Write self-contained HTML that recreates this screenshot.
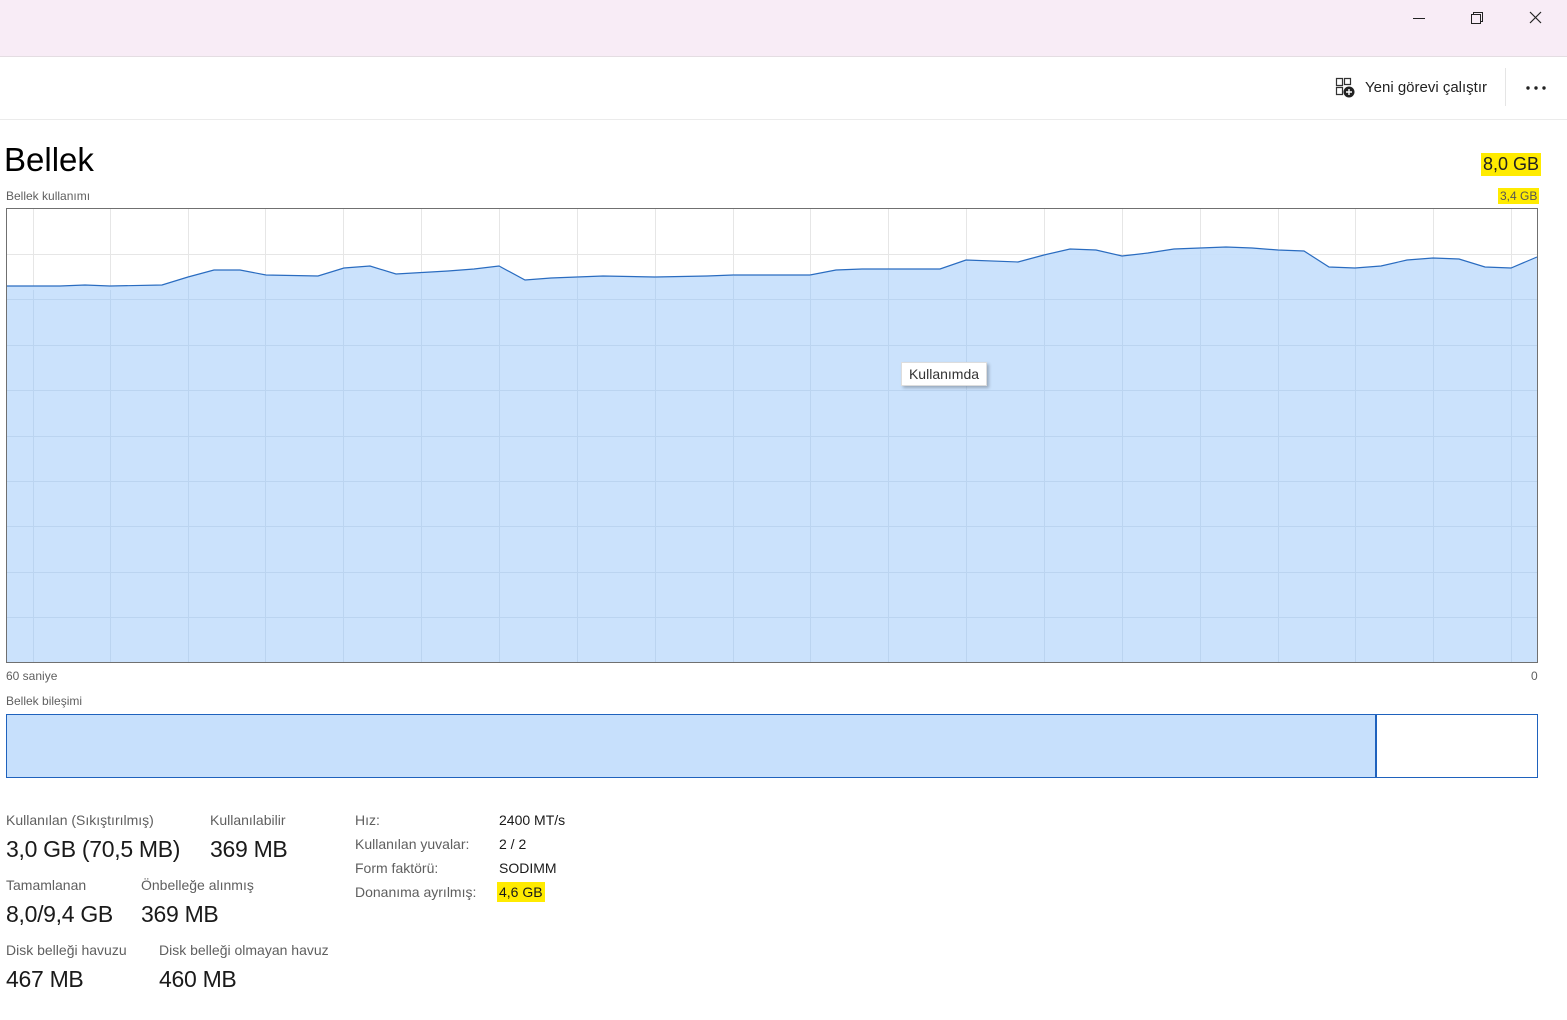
<!DOCTYPE html>
<html><head><meta charset="utf-8">
<style>
body{margin:0;width:1567px;height:1020px;background:#fff;font-family:"Liberation Sans","DejaVu Sans",sans-serif;position:relative;overflow:hidden;color:#1a1a1a}
.a{position:absolute;white-space:nowrap}
.s{font-size:14px;color:#5f5f5f}
.sm{font-size:12px;color:#5f5f5f}
.v{font-size:23px;color:#1a1a1a;letter-spacing:-0.3px}
.hl{background:#ffeb00}
</style></head><body>
<div class="a" style="left:0;top:0;width:1567px;height:56px;background:#f8ecf6;border-bottom:1px solid #e4dde2"></div>
<svg class="a" style="left:1400px;top:0" width="167" height="40">
<line x1="13" y1="18.5" x2="25" y2="18.5" stroke="#222" stroke-width="1"/>
<rect x="71.5" y="14.5" width="9" height="9" fill="none" stroke="#222"/>
<path d="M73.5 14.5V12.5H82.5V21.5H80.5" fill="none" stroke="#222"/>
<path d="M130 12L141 23M141 12L130 23" stroke="#222" stroke-width="1.2"/>
</svg>
<div class="a" style="left:0;top:119px;width:1567px;height:1px;background:#ebebeb"></div>
<div class="a" style="left:1505px;top:68px;width:1px;height:38px;background:#e5e5e5"></div>
<svg class="a" style="left:1334px;top:77px" width="24" height="22">
<path d="M2.5 1.5h6v7h-6zM10.5 1.5h6v6h-6zM2.5 10.5h6v7h-6z" fill="none" stroke="#333" stroke-width="1.2"/>
<circle cx="15" cy="15" r="5.5" fill="#222"/>
<path d="M15 12v6M12 15h6" stroke="#fff" stroke-width="1.4"/>
</svg>
<div class="a" style="left:1365px;top:79px;font-size:15px;color:#222">Yeni görevi çalıştır</div>
<svg class="a" style="left:1524px;top:84px" width="26" height="8">
<circle cx="4" cy="4" r="1.7" fill="#222"/><circle cx="12" cy="4" r="1.7" fill="#222"/><circle cx="20" cy="4" r="1.7" fill="#222"/>
</svg>

<div class="a" style="left:4px;top:141px;font-size:33px;color:#000">Bellek</div>
<div class="a s" style="left:6px;top:189px;font-size:12px">Bellek kullanımı</div>
<div class="a hl" style="left:1481px;top:153px;font-size:18px;padding:1px 2px;color:#222">8,0 GB</div>
<div class="a hl" style="left:1498px;top:188px;font-size:12px;padding:1px 2px;color:#555">3,4 GB</div>

<svg class="a" style="left:0;top:0" width="1567" height="800">
<g stroke="#e6e6e6" stroke-width="1">
<path d="M33.5 209V662M110.5 209V662M188.5 209V662M265.5 209V662M343.5 209V662M421.5 209V662M499.5 209V662M577.5 209V662M655.5 209V662M733.5 209V662M810.5 209V662M888.5 209V662M966.5 209V662M1044.5 209V662M1122.5 209V662M1200.5 209V662M1278.5 209V662M1355.5 209V662M1433.5 209V662M1511.5 209V662"/>
<path d="M7 254.5H1537M7 299.5H1537M7 345.5H1537M7 390.5H1537M7 436.5H1537M7 481.5H1537M7 526.5H1537M7 572.5H1537M7 617.5H1537"/>
</g>
<path d="M7,286 L60,286 L85,285 L110,286 L162,285 L188,277 L214,270 L240,270 L266,275 L318,276 L344,268 L370,266 L396,274 L448,271 L474,269 L499,266 L525,280 L551,278 L603,276 L655,277 L707,276 L733,275 L810,275 L836,270 L862,269 L940,269 L966,260 L1018,262 L1044,255 L1070,249 L1096,250 L1122,256 L1148,253 L1174,249 L1226,247 L1252,248 L1278,250 L1304,251 L1329,267 L1355,268 L1381,266 L1407,260 L1433,258 L1459,259 L1485,267 L1511,268 L1537,257 L1537,662 L7,662Z" fill="#c7e0fc" fill-opacity="0.92"/>
<g stroke="#b3cdea" stroke-width="1" opacity="0.6">
<path d="M33.5 290V662M110.5 290V662M188.5 280V662M265.5 276V662M343.5 270V662M421.5 274V662M499.5 268V662M577.5 278V662M655.5 278V662M733.5 276V662M810.5 276V662M888.5 270V662M966.5 262V662M1044.5 256V662M1122.5 256V662M1200.5 250V662M1278.5 250V662M1355.5 268V662M1433.5 258V662M1511.5 268V662"/>
<path d="M7 299.5H1537M7 345.5H1537M7 390.5H1537M7 436.5H1537M7 481.5H1537M7 526.5H1537M7 572.5H1537M7 617.5H1537"/>
</g>
<path d="M7,286 L60,286 L85,285 L110,286 L162,285 L188,277 L214,270 L240,270 L266,275 L318,276 L344,268 L370,266 L396,274 L448,271 L474,269 L499,266 L525,280 L551,278 L603,276 L655,277 L707,276 L733,275 L810,275 L836,270 L862,269 L940,269 L966,260 L1018,262 L1044,255 L1070,249 L1096,250 L1122,256 L1148,253 L1174,249 L1226,247 L1252,248 L1278,250 L1304,251 L1329,267 L1355,268 L1381,266 L1407,260 L1433,258 L1459,259 L1485,267 L1511,268 L1537,257" fill="none" stroke="#2a6cc0" stroke-width="1.2"/>
<rect x="6.5" y="208.5" width="1531" height="454" fill="none" stroke="#707070"/>
<rect x="6.5" y="714.5" width="1531" height="63" fill="#fff" stroke="#1f62bd"/>
<rect x="7" y="715" width="1368" height="62" fill="#c7e0fc"/>
<line x1="1376" y1="715" x2="1376" y2="778" stroke="#1f62bd" stroke-width="2"/>
</svg>
<div class="a" style="left:901px;top:362px;width:84px;height:22px;background:#fff;border:1px solid #ddd;box-shadow:2px 2px 3px rgba(0,0,0,.25);font-size:14px;color:#333;line-height:22px;text-align:center">Kullanımda</div>
<div class="a sm" style="left:6px;top:669px">60 saniye</div>
<div class="a sm" style="left:1531px;top:669px">0</div>
<div class="a sm" style="left:6px;top:694px">Bellek bileşimi</div>

<div class="a s" style="left:6px;top:812px">Kullanılan (Sıkıştırılmış)</div>
<div class="a v" style="left:6px;top:836px">3,0 GB (70,5 MB)</div>
<div class="a s" style="left:210px;top:812px">Kullanılabilir</div>
<div class="a v" style="left:210px;top:836px">369 MB</div>
<div class="a s" style="left:6px;top:877px">Tamamlanan</div>
<div class="a v" style="left:6px;top:901px">8,0/9,4 GB</div>
<div class="a s" style="left:141px;top:877px">Önbelleğe alınmış</div>
<div class="a v" style="left:141px;top:901px">369 MB</div>
<div class="a s" style="left:6px;top:942px">Disk belleği havuzu</div>
<div class="a v" style="left:6px;top:966px">467 MB</div>
<div class="a s" style="left:159px;top:942px">Disk belleği olmayan havuz</div>
<div class="a v" style="left:159px;top:966px">460 MB</div>

<div class="a s" style="left:355px;top:812px">Hız:</div>
<div class="a" style="left:499px;top:812px;font-size:14px">2400 MT/s</div>
<div class="a s" style="left:355px;top:836px">Kullanılan yuvalar:</div>
<div class="a" style="left:499px;top:836px;font-size:14px">2 / 2</div>
<div class="a s" style="left:355px;top:860px">Form faktörü:</div>
<div class="a" style="left:499px;top:860px;font-size:14px">SODIMM</div>
<div class="a s" style="left:355px;top:884px">Donanıma ayrılmış:</div>
<div class="a hl" style="left:497px;top:882px;font-size:14px;padding:2px 2px">4,6 GB</div>
</body></html>
